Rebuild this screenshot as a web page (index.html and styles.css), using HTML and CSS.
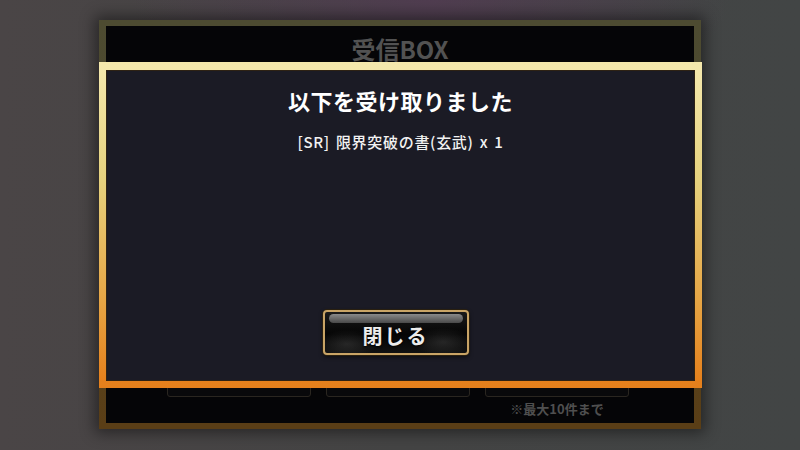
FILE: index.html
```html
<!DOCTYPE html>
<html lang="ja">
<head>
  <meta charset="UTF-8"/>
  <meta name="viewport" content="width=device-width,initial-scale=1.0"/>
  <title>受信BOX</title>
  <link rel="stylesheet" href="styles.css">
</head>
<body>
  <div class="scene">
    <div class="inbox">
      <h2 class="inbox-title">受信BOX</h2>
      <div class="inbox-list"></div>
      <div class="inbox-actions">
        <button class="ghost-btn">期限順</button>
        <button class="ghost-btn">一括受け取り</button>
        <button class="ghost-btn">受け取り</button>
        <p class="inbox-note">※最大10件まで</p>
      </div>
    </div>

    <div class="dialog">
      <h1 class="dialog-title">以下を受け取りました</h1>
      <p class="dialog-item">[SR] 限界突破の書(玄武) x 1</p>
      <button class="close-btn">閉じる</button>
    </div>
  </div>
</body>
</html>
```

FILE: styles.css
```css
    html, body {
      margin: 0;
      padding: 0;
    }
    body {
      font-family: "Noto Sans CJK JP", "Noto Sans", sans-serif;
      color: #fff;
      background: #444;
      overflow: hidden;
    }
    .scene {
      position: relative;
      width: 800px;
      height: 450px;
      box-sizing: border-box;
      padding-top: 20px;
      display: flex;
      justify-content: center;
      background:
        radial-gradient(ellipse 300px 120px at 430px 0, rgba(90,55,90,0.55), rgba(90,55,90,0) 100%),
        linear-gradient(90deg, #4a4546 0%, #444 50%, #424545 100%);
    }

    /* back panel (inbox) */
    .inbox {
      width: 602px;
      height: 409px;
      box-sizing: border-box;
      border-style: solid;
      border-width: 6px 7px 6px 7px;
      border-image: linear-gradient(#4d4b31, #4e4628 50%, #5a3e16) 1;
      background: #050507;
      box-shadow: 0 0 14px 4px rgba(0,0,0,0.45);
      display: flex;
      flex-direction: column;
      align-items: center;
    }
    .inbox-title {
      margin: 0;
      padding-top: 8px;
      font-size: 24px;
      line-height: 30px;
      font-weight: 700;
      color: #525252;
    }
    .inbox-list { flex: 1; }
    .inbox-actions {
      display: grid;
      grid-template-columns: repeat(3, 144px);
      column-gap: 15px;
      row-gap: 3px;
      margin-bottom: 6px;
      margin-right: 4px;
    }
    .ghost-btn {
      height: 36px;
      border: 1px solid #2a2620;
      border-radius: 3px;
      background: #09090b;
      color: #333;
      font-family: inherit;
      font-size: 14px;
      font-weight: 700;
    }
    .inbox-note {
      grid-column: 3;
      margin: 0;
      text-align: center;
      font-size: 13px;
      line-height: 17px;
      font-weight: 700;
      color: #4f4f4f;
    }

    /* front dialog */
    .dialog {
      position: absolute;
      left: 99px;
      top: 62px;
      width: 603px;
      height: 326px;
      box-sizing: border-box;
      border-style: solid;
      border-width: 8px 7px 7px 7px;
      border-image: linear-gradient(#f4e8ac, #e6d27e 35%, #e6a443 75%, #e5801c) 1;
      background: #1b1b25;
      box-shadow: inset 0 0 0 1px rgba(60,40,10,0.6);
      display: flex;
      flex-direction: column;
      align-items: center;
    }
    .dialog-title {
      margin: 0;
      padding-top: 15px;
      font-size: 22px;
      line-height: 30px;
      font-weight: 700;
      letter-spacing: 0.5px;
    }
    .dialog-item {
      margin: 17px 0 0;
      font-size: 15px;
      line-height: 20px;
      font-weight: 500;
      letter-spacing: 0.7px;
      word-spacing: 2px;
      color: #f2f2f2;
    }
    .close-btn {
      position: relative;
      margin-top: auto;
      margin-bottom: 26px;
      margin-right: 10px;
      width: 146px;
      height: 45px;
      box-sizing: border-box;
      border: 2px solid #c9a466;
      border-radius: 4px;
      background:
        radial-gradient(ellipse 30px 14px at 22px 32px, rgba(90,90,90,0.35), rgba(90,90,90,0) 100%),
        radial-gradient(ellipse 30px 14px at 118px 30px, rgba(90,90,90,0.35), rgba(90,90,90,0) 100%),
        linear-gradient(#1a1a1a, #050505 55%, #111);
      box-shadow: 0 0 0 1px #2a2010, 0 2px 4px rgba(0,0,0,0.6);
      color: #ececec;
      font-family: inherit;
      font-size: 20px;
      font-weight: 700;
      letter-spacing: 2px;
      padding: 6px 0 0;
      text-shadow: 0 1px 2px #000;
    }
    .close-btn::before {
      content: "";
      position: absolute;
      left: 4px;
      right: 4px;
      top: 2px;
      height: 9px;
      border-radius: 5px;
      background: linear-gradient(#8a8a8a, #4a4a4a);
    }
```
